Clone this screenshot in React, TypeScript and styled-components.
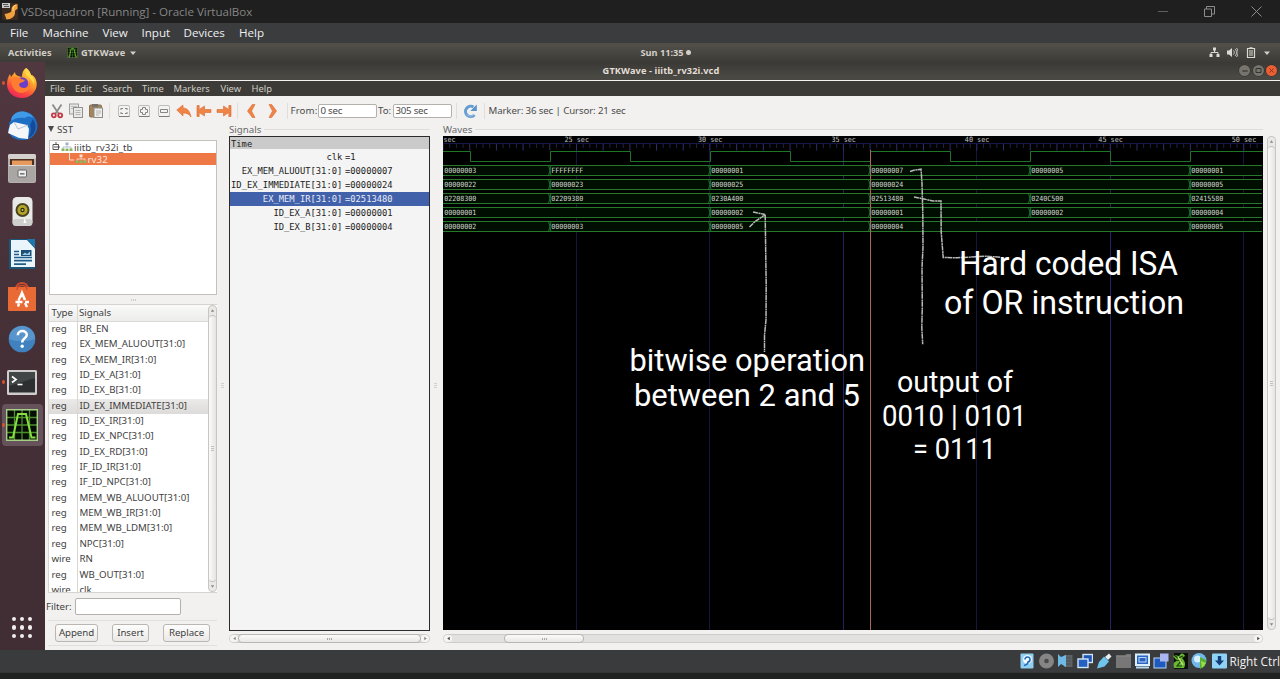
import React from "react";
import styled, { createGlobalStyle } from "styled-components";

const Global = createGlobalStyle`
  * { box-sizing: border-box; }
  body { margin: 0; background: #202020; overflow: hidden; }
`;

const ui = `"Noto Sans", "Open Sans", sans-serif`;
const host = `"Open Sans", "Noto Sans", sans-serif`;
const mono = `"DejaVu Sans Mono", "Liberation Mono", monospace`;

const Screen = styled.div`
  width: 1280px;
  height: 679px;
  display: flex;
  flex-direction: column;
  overflow: hidden;
  background: #202121;
  font-family: ${ui};
  font-size: 9.7px;
  color: #3f3f3f;
  white-space: pre;
`;

const HostTitle = styled.header`
  height: 23px;
  flex: none;
  display: flex;
  align-items: center;
  background: #1f1f1f;
  color: #858585;
  font: 11.6px ${host};
  padding: 0 18px 0 2px;
`;
const HostName = styled.span`
  margin-left: 3px;
  flex: 1;
  letter-spacing: -0.04px;
`;
const HostControls = styled.div`
  display: flex;
  gap: 36px;
  align-items: center;
`;

const HostMenu = styled.nav`
  height: 20px;
  flex: none;
  display: flex;
  align-items: center;
  padding: 0 0 1px 10px;
  background: #3a3c3e;
  color: #f0f0f0;
  font: 11.6px ${host};
`;
const MenuItem = styled.span<{ $w: number; $ls?: number }>`
  width: ${(p) => p.$w}px;
  flex: none;
  letter-spacing: ${(p) => p.$ls ?? 0}px;
`;

const GnomeBar = styled.div`
  height: 19px;
  flex: none;
  display: grid;
  grid-template-columns: 1fr auto 1fr;
  align-items: center;
  padding: 0 10px 0 8px;
  background: linear-gradient(#504e47 0%, #504e47 15%, #3d3b37 100%);
  color: #d3d0c9;
  font-weight: 700;
  font-size: 9.2px;
`;
const BarGroup = styled.div<{ $end?: boolean; $gap: number }>`
  display: flex;
  align-items: center;
  gap: ${(p) => p.$gap}px;
  justify-content: ${(p) => (p.$end ? "flex-end" : "flex-start")};
`;
const Clock = styled.div`
  display: flex;
  align-items: center;
  gap: 2px;
  margin-left: 53px;
`;
const ClockDot = styled.i`
  width: 5px;
  height: 5px;
  border-radius: 50%;
  background: #d3d0c9;
`;

const Desktop = styled.div`
  height: 588px;
  flex: none;
  display: flex;
`;
const Dock = styled.aside`
  width: 45px;
  flex: none;
  display: flex;
  flex-direction: column;
  background: linear-gradient(#513740, #432f35 55%, #412e34);
`;
const DockSlot = styled.div<{ $on?: boolean }>`
  position: relative;
  width: 41px;
  height: 41.75px;
  margin: 0 0 1px 1.5px;
  flex: none;
  display: flex;
  align-items: center;
  justify-content: center;
  border-radius: 4px;
  background: ${(p) => (p.$on ? "#66525a" : "transparent")};
`;
const RunDot = styled.i`
  position: absolute;
  left: 0;
  top: 19px;
  width: 3px;
  height: 4px;
  border-radius: 50%;
  background: #d8532c;
`;
const AppsGrid = styled.div`
  margin: auto 0 11px 12px;
  display: grid;
  grid-template-columns: repeat(3, 4px);
  gap: 4px;
  padding-bottom: 1px;
  i { width: 4.4px; height: 4.4px; border-radius: 50%; background: #f1eeee; }
`;

const Win = styled.main`
  flex: 1;
  display: flex;
  flex-direction: column;
  background: #f2f1f0;
  min-width: 0;
`;
const WinTitle = styled.div`
  height: 19px;
  flex: none;
  display: grid;
  grid-template-columns: 1fr auto 1fr;
  align-items: center;
  background: linear-gradient(#3b3935, #4a4843 80%);
  border-bottom: 1px solid #f4f3f1;
  color: #e2ded6;
  font-weight: 700;
  font-size: 9.2px;
  padding: 0 3px 1px 0;
`;
const WinName = styled.span`
  letter-spacing: 0.13px;
`;
const WinButtons = styled.div`
  display: flex;
  justify-content: flex-end;
  gap: 2.5px;
`;
const WinButton = styled.span<{ $c: string }>`
  width: 11px;
  height: 11px;
  border-radius: 50%;
  display: flex;
  align-items: center;
  justify-content: center;
  background: ${(p) => p.$c};
  box-shadow: 0 0 0 0.5px #2f2d29;
`;
const WinMenu = styled.nav`
  height: 15px;
  flex: none;
  display: flex;
  align-items: center;
  padding-left: 5px;
  background: #3c3b37;
  color: #d0ccc4;
  font-size: 9.4px;
`;

const Toolbar = styled.div`
  height: 30px;
  flex: none;
  display: flex;
  align-items: center;
  padding: 0 0 1px 2px;
  color: #4b4b4b;
`;
const Tool = styled.span<{ $w: number }>`
  width: ${(p) => p.$w}px;
  height: 16px;
  flex: none;
  display: flex;
  align-items: center;
  justify-content: center;
`;
const Sep = styled.span<{ $m: number }>`
  width: 1px;
  height: 16px;
  margin: 0 ${(p) => p.$m}px;
  background: #e0dedb;
  flex: none;
`;
const ToolLabel = styled.span<{ $w: number; $ls: number; $pad?: number }>`
  width: ${(p) => p.$w}px;
  padding-left: ${(p) => p.$pad ?? 0}px;
  letter-spacing: ${(p) => p.$ls}px;
  flex: none;
`;
const Field = styled.span<{ $w: number; $h: number }>`
  width: ${(p) => p.$w}px;
  height: ${(p) => p.$h}px;
  flex: none;
  display: flex;
  align-items: center;
  padding-left: 2px;
  background: #fff;
  border: 1px solid #b4b0ab;
  border-radius: 2px;
  letter-spacing: -0.25px;
`;

const Work = styled.div`
  flex: 1;
  min-height: 0;
  display: flex;
`;

const Left = styled.section`
  width: 172px;
  flex: none;
  display: flex;
  flex-direction: column;
`;
const SstHead = styled.div`
  height: 14px;
  display: flex;
  align-items: center;
  gap: 3px;
  padding: 0 0 8px 3px;
  flex: none;
`;
const Tree = styled.div`
  width: 168px;
  height: 155px;
  margin-left: 4px;
  flex: none;
  background: #fff;
  border: 1px solid #c4c1bd;
`;
const TreeRow = styled.div<{ $on?: boolean; $pad: number }>`
  height: 12px;
  display: flex;
  align-items: center;
  gap: 1px;
  padding-left: ${(p) => p.$pad}px;
  background: ${(p) => (p.$on ? "#ef7847" : "transparent")};
  color: ${(p) => (p.$on ? "#ffe9de" : "#3f3f3f")};
  letter-spacing: 0.08px;
`;
const HGrip = styled.div`
  height: 9px;
  flex: none;
  display: flex;
  align-items: center;
  justify-content: center;
  gap: 1px;
  padding-left: 4px;
  i { width: 1px; height: 2px; background: #cfccc8; }
`;
const ListWrap = styled.div`
  height: 289px;
  flex: none;
  margin-left: 3px;
  display: flex;
  border: 1px solid #d6d3d0;
  border-right: 0;
  background: #fff;
`;
const List = styled.div`
  width: 160px;
  overflow: hidden;
`;
const ListRow = styled.div<{ $on?: boolean; $head?: boolean }>`
  height: ${(p) => (p.$head ? 17 : 15.35)}px;
  display: grid;
  grid-template-columns: 28px 1fr;
  align-items: stretch;
  line-height: ${(p) => (p.$head ? 16 : 14.4)}px;
  background: ${(p) =>
    p.$head
      ? "linear-gradient(#fafafa, #ececeb)"
      : p.$on
      ? "linear-gradient(#ebeae8, #dddbd9)"
      : "#fff"};
  border-bottom: ${(p) => (p.$head ? "1px solid #dcdad8" : "0")};
  span { padding-left: 2.5px; letter-spacing: ${(p) => (p.$head ? -0.05 : -0.05)}px; }
  span + span { border-left: 1px solid #d9d7d5; padding-left: ${(p) => (p.$head ? 1 : 1.5)}px; }
`;
const VScroll = styled.div<{ $h: string }>`
  width: 9px;
  height: ${(p) => p.$h};
  flex: none;
  display: flex;
  flex-direction: column;
  border: 1px solid #c9c5c1;
  border-radius: 4px;
  background: #ebe9e7;
`;
const ScrollEnd = styled.span`
  width: 7px;
  height: 9px;
  flex: none;
  display: flex;
  align-items: center;
  justify-content: center;
`;
const VThumb = styled.span`
  flex: 1;
  display: flex;
  flex-direction: column;
  align-items: center;
  justify-content: center;
  gap: 1px;
  border: 1px solid #c2beba;
  border-width: 1px 0;
  border-radius: 4px;
  background: linear-gradient(90deg, #fbfbfa, #e6e4e2);
  i { width: 3px; height: 1px; background: #c4c1bd; }
`;
const FilterRow = styled.div`
  height: 27px;
  flex: none;
  display: flex;
  align-items: center;
  padding-left: 1px;
`;
const ButtonRow = styled.div`
  height: 26px;
  flex: none;
  margin: 0 0 0 3px;
  display: flex;
  align-items: center;
  padding-left: 7px;
  border-top: 1px solid #e2e0de;
  border-bottom: 1px solid #e2e0de;
`;
const Button = styled.button<{ $w: number; $gap: number }>`
  width: ${(p) => p.$w}px;
  height: 18px;
  margin: 0 ${(p) => p.$gap}px 0 0;
  padding: 0;
  flex: none;
  border: 1px solid #bab6b1;
  border-radius: 3px;
  background: linear-gradient(#fdfdfd, #ebe9e7);
  font: 9.7px/14px ${ui};
  letter-spacing: -0.05px;
  color: #3f3f3f;
`;

const VGrip = styled.div<{ $w: number; $dx: number }>`
  width: ${(p) => p.$w}px;
  flex: none;
  display: flex;
  flex-direction: column;
  align-items: center;
  padding: 257px ${(p) => p.$dx}px 0 0;
  gap: 1px;
  i { width: 3px; height: 1px; background: #d2cfcc; }
`;

const Frame = styled.section<{ $w: number }>`
  width: ${(p) => p.$w}px;
  flex: none;
  display: flex;
  flex-direction: column;
`;
const FrameLabel = styled.div`
  height: 14px;
  margin-top: -4px;
  flex: none;
  display: flex;
  align-items: center;
  gap: 3px;
  color: #6a6a6a;
  &::after { content: ""; flex: 1; height: 1px; background: #dfddda; }
`;
const SignalBox = styled.div`
  height: 495px;
  flex: none;
  border: 1px solid #2b2b2b;
  background: #f4f4f4;
  font: 8.8px/14px ${mono};
  color: #222;
`;
const TimeHead = styled.div`
  height: 12px;
  line-height: 14px;
  padding-left: 1px;
  background: #cacaca;
  margin-bottom: 1px;
`;
const SignalRow = styled.div<{ $on?: boolean }>`
  height: 14px;
  display: grid;
  grid-template-columns: 112.3px 1fr;
  column-gap: 2.7px;
  background: ${(p) => (p.$on ? "#4261ab" : "transparent")};
  color: ${(p) => (p.$on ? "#e6ebf7" : "#222")};
  span:first-child { text-align: right; }
`;
const HScroll = styled.div<{ $mt: number }>`
  height: 9px;
  flex: none;
  margin-top: ${(p) => p.$mt}px;
  display: flex;
  align-items: center;
  border: 1px solid #cfccc8;
  border-radius: 5px;
  background: #e3e1df;
`;
const HThumb = styled.span<{ $l: number; $w: number }>`
  margin-left: ${(p) => p.$l}px;
  width: ${(p) => p.$w}px;
  height: 9px;
  flex: none;
  display: flex;
  align-items: center;
  justify-content: center;
  gap: 1px;
  border: 1px solid #b9b5b0;
  border-radius: 4px;
  background: linear-gradient(#fbfbfa, #e9e7e5);
  i { width: 1px; height: 2px; background: #a9a6a2; }
`;
const HEnd = styled.span<{ $auto?: boolean }>`
  width: 8px;
  flex: none;
  height: 7px;
  border-radius: 4px;
  background: #f6f5f4;
  display: flex;
  align-items: center;
  justify-content: center;
  margin-left: ${(p) => (p.$auto ? "auto" : "0")};
`;
const WaveSvg = styled.svg`
  display: block;
  width: 820px;
  height: 494px;
  flex: none;
  background: #000;
`;
const RightRail = styled.div`
  flex: 1;
  padding: 10px 0 0 3px;
  margin-left: 1px;
`;

const StatusBar = styled.footer`
  height: 23px;
  flex: none;
  display: flex;
  align-items: center;
  justify-content: flex-end;
  background: #3a3b3c;
  color: #f2f2f2;
  font: 11.8px ${host};
  padding-bottom: 1px;
  border-bottom: 1px solid #343534;
`;
const StatusIcons = styled.div`
  display: flex;
  gap: 3.15px;
  margin-right: 3px;
`;
const StatusText = styled.span`
  width: 50.5px;
  letter-spacing: -0.02px;
`;

/* ---------- dock icons ---------- */
const Ico = ({ children, s = 32 }: { children: React.ReactNode; s?: number }) => (
  <svg width={s} height={s} viewBox="0 0 32 32">{children}</svg>
);

const Firefox = () => (
  <Ico>
    <defs>
      <linearGradient id="ff" x1="0.8" y1="0" x2="0.3" y2="1">
        <stop offset="0" stopColor="#ffe14a" />
        <stop offset="0.45" stopColor="#ff9a2b" />
        <stop offset="0.75" stopColor="#fb4a3f" />
        <stop offset="1" stopColor="#e8255f" />
      </linearGradient>
    </defs>
    <path d="M20 1c3 2 4 4 5 7 2 0 4 2 5 5 3 9-4 18-14 18C7 31 1 25 1 17c0-4 1-7 3-10l1 3 4-5c0 2 1 3 3 4l4 1c0-4 1-7 4-9z" fill="url(#ff)" />
    <circle cx="16" cy="16.500" r="6.200" fill="#6a3fc8" />
    <path d="M6 12c3-3 7-2 9 0l4 1c-1 2-3 2-5 3-2 2 0 5 4 5 4 0 6-4 5-8 3 5 1 12-7 13-7 0-12-7-10-14z" fill="#ff7d30" />
    <path d="M20 1c3 2 4 4 5 7 2 2 4 5 3 10-1-4-4-7-7-9-2-2-2-5-1-8z" fill="#ffd84a" />
  </Ico>
);
const Thunderbird = () => (
  <Ico>
    <path d="M10 3c8-4 19 0 21 10 2 9-5 18-15 17C8 30 3 26 2 19c1-1 2-3 1-5 0-2 1-3 3-4-1-3 1-5 4-7z" fill="#1d6fc6" />
    <path d="M10 3c6-3 14-1 18 5-4-2-7-2-9 0-6-1-10 0-14 3 0-4 2-6 5-8z" fill="#3f9ae8" />
    <path d="M27 9c5 7 3 17-7 20 5-4 6-9 4-14z" fill="#154a98" />
    <path d="M4 15l4-3 13 3 2 4-1 10-9-1L2 23z" fill="#f4f6fa" />
    <path d="M8 12l4 7 10-4" fill="none" stroke="#b8c4d4" strokeWidth="1" />
  </Ico>
);
const Files = () => (
  <Ico>
    <rect x="2" y="2" width="28" height="29" rx="2" fill="#b3b0ad" />
    <rect x="2" y="2" width="28" height="5" rx="2" fill="#d2cfcc" />
    <rect x="4" y="7" width="24" height="6" fill="#4f2f20" />
    <path d="M6 8.500h20v5H6z" fill="#e79a5e" />
    <rect x="3" y="13" width="26" height="17" fill="#a9a6a4" />
    <path d="M3 13.500h26" stroke="#dcdad8" />
    <rect x="12" y="18" width="8.500" height="7" rx="1" fill="#efefef" stroke="#666" strokeWidth="1" />
    <rect x="14" y="21" width="4.500" height="1.600" fill="#777" />
  </Ico>
);
const Rhythmbox = () => (
  <Ico>
    <rect x="6.500" y="2" width="20" height="29" rx="4.500" fill="#e9e9e7" />
    <rect x="6.500" y="24" width="20" height="7" rx="3.500" fill="#cfcfcd" />
    <circle cx="16.500" cy="15" r="7" fill="#4a4520" />
    <circle cx="16.500" cy="15" r="5" fill="#b5a52c" />
    <circle cx="16.500" cy="15" r="2.200" fill="#2c2a18" />
    <circle cx="16.500" cy="15" r="1" fill="#d8c94a" />
    <path d="M18.500 23l2 5h-3z" fill="#fff" />
  </Ico>
);
const Writer = () => (
  <Ico>
    <path d="M3 1h26v30H3z" fill="#1b5578" />
    <path d="M5 2h16l8 8.500V29H5z" fill="#e9f4fb" />
    <path d="M21 1h8v9.500z" fill="#1d76ad" />
    <g stroke="#1c5d8c" strokeWidth="1.700">
      <path d="M8 13.500h5M8 16.500h5M8 19.500h18M8 22.700h18M8 26.200h12" />
    </g>
    <rect x="15" y="12" width="10.500" height="6" fill="#1c4f78" />
    <path d="M16 17l3-2.500 2 1.500 3-2.500V17z" fill="#9cc7e4" />
  </Ico>
);
const Software = () => (
  <Ico>
    <path d="M10 8c0-8 12-8 12 0" fill="none" stroke="#d04c2a" strokeWidth="2" />
    <path d="M2 6h28v23a1 1 0 0 1-1 1H3a1 1 0 0 1-1-1z" fill="#ea6a35" />
    <path d="M11 9c0-6 10-6 10 0" fill="none" stroke="#d04c2a" strokeWidth="1.500" />
    <path d="M14.500 16l1.500-4 3 7" stroke="#fff" strokeWidth="2.600" fill="none" />
    <path d="M14.500 15l-2 4.500M9.500 21h7M19 21h4M12 25.500l1-3M19 22l2 4" stroke="#fff" strokeWidth="2.400" fill="none" />
  </Ico>
);
const HelpIco = () => (
  <Ico>
    <circle cx="16" cy="16" r="13.300" fill="#4082c0" />
    <path d="M3 16a13 13 0 0 1 26 0c-8 3-18 3-26 0z" fill="#5895cd" />
    <path d="M11.800 12.200c0-5.500 9-5.500 9-.4 0 3.600-4.600 3.500-4.600 7.700" fill="none" stroke="#fff" strokeWidth="2.500" />
    <circle cx="16.200" cy="23.300" r="1.700" fill="#fff" />
  </Ico>
);
const Terminal = () => (
  <Ico>
    <rect x="1" y="4" width="30" height="25" rx="1.500" fill="#cfcccc" />
    <rect x="3" y="6" width="26" height="20.500" fill="#2d2f30" />
    <path d="M3 6h26v6L3 20z" fill="#434647" />
    <path d="M6 10.500l4 3-4 3" fill="none" stroke="#fff" strokeWidth="1.700" />
    <path d="M11.500 18.500h5" stroke="#fff" strokeWidth="1.600" />
  </Ico>
);
const GtkWave = ({ s = 32 }: { s?: number }) => (
  <Ico s={s}>
    <rect x="0" y="0" width="32" height="32" fill="#060d04" />
    <path d="M8.500 1v30M16 1v30M23.500 1v30M1 8.500h30M1 16h30M1 23.500h30" fill="none" stroke="#4b8f2c" strokeWidth="1.300" />
    <path d="M.7.7h30.600v30.600H.7z" fill="none" stroke="#a5cf84" strokeWidth="1.400" />
    <path d="M3 28.500h4l5-23.500h8l5.500 23.500H29.500" fill="none" stroke="#86e040" strokeWidth="2" />
  </Ico>
);

/* ---------- toolbar icons ---------- */
const T = ({ children }: { children: React.ReactNode }) => (
  <svg width="16" height="16" viewBox="0 0 16 16">{children}</svg>
);
const orange = { fill: "#f08346", stroke: "#d96a30", strokeWidth: 0.6 };
const Cut = () => (
  <T>
    <path d="M3.500 1.500l6 9M12.500 1.500l-6 9" stroke="#8a8a8a" strokeWidth="1.800" fill="none" />
    <circle cx="4.800" cy="12.300" r="2" fill="none" stroke="#c23a45" strokeWidth="1.800" />
    <circle cx="11.200" cy="12.300" r="2" fill="none" stroke="#c23a45" strokeWidth="1.800" />
  </T>
);
const Copy = () => (
  <T>
    <rect x="1.500" y="1" width="9" height="10" fill="#e8e8e6" stroke="#9c9c98" />
    <path d="M3 3.500h6M3 5.500h4" stroke="#bbb" />
    <rect x="5.500" y="4.500" width="9" height="10" fill="#e9e9e7" stroke="#92928e" />
    <path d="M7.500 7.500h5M7.500 9.500h5M7.500 11.500h5" stroke="#b4b4b2" />
  </T>
);
const Paste = () => (
  <T>
    <rect x="1.500" y="2" width="12" height="12" rx="1" fill="#a5845a" stroke="#8b7658" />
    <rect x="4" y="1" width="6" height="3" fill="#77716a" />
    <rect x="6" y="5" width="8.500" height="9.500" fill="#eeeeec" stroke="#8d8d89" />
    <path d="M8 8h5M8 10h5M8 12h3" stroke="#b4b4b2" />
  </T>
);
const Zoom = ({ d }: { d: string }) => (
  <T>
    <rect x="2.500" y="2.500" width="11" height="11" rx="1.500" fill="#f3f3f1" stroke="#bcbcb8" />
    <path d="M3 13.500h10.500" stroke="#7b7b78" />
    <path d={d} stroke="#858581" strokeWidth="1" fill="none" />
  </T>
);
const Undo = () => (
  <T><path d="M.8 7L7 2v3c4 0 7 3 8 9-2-3-4-4-8-4v3z" {...orange} /></T>
);
const First = () => (
  <T><path d="M1 2.500h2.200v4L8.500 3v3.500H15v3H8.500V13L3.200 9.500v4H1z" {...orange} /></T>
);
const Last = () => (
  <T><path d="M15 2.500h-2.200v4L7.500 3v3.500H1v3h6.500V13l5.300-3.500v4H15z" {...orange} /></T>
);
const Prev = () => (
  <T><path d="M9.300 1.500L4.500 8l4.800 6.500h2.700L8.500 8 12 1.500z" {...orange} /></T>
);
const Next = () => (
  <T><path d="M6.700 1.500L11.500 8l-4.800 6.500H4L7.500 8 4 1.500z" {...orange} /></T>
);
const Reload = () => (
  <T>
    <path d="M12.500 12a5.200 5.200 0 1 1-1-8" fill="none" stroke="#659dd2" strokeWidth="3" />
    <path d="M14.800 1.500v6.500H8.300z" fill="#5a94cc" />
    <path d="M11.500 12a4.600 4.600 0 0 1-7-1" fill="none" stroke="#9dc4e6" strokeWidth="1" />
  </T>
);
const NodeIco = ({ c }: { c: string }) => (
  <svg width="12" height="10" viewBox="0 0 12 10">
    <rect x="4.500" y="0.500" width="3" height="2.500" fill={c} />
    <path d="M6 3v2M2 7V5h8v2" stroke={c} fill="none" strokeWidth="0.800" />
    <rect x="0.500" y="6.500" width="3" height="2.500" fill="#86b860" />
    <rect x="4.500" y="6.500" width="3" height="2.500" fill="#86b860" />
    <rect x="8.500" y="6.500" width="3" height="2.500" fill="#86b860" />
  </svg>
);
const Tri = ({ d, s = 5, c = "#8b8884" }: { d: string; s?: number; c?: string }) => (
  <svg width={s} height={s} viewBox="0 0 6 6"><path d={d} fill={c} /></svg>
);
const UP = "M3 1.500l2 3H1z";
const DOWN = "M3 4.500l2-3H1z";
const LEFT = "M1.500 3l3-2v4z";
const RIGHT = "M4.500 3l-3-2v4z";

/* ---------- waveform ---------- */
const X25 = 576.5;
const SEC = 26.69;
const labels = [25, 30, 35, 40, 45, 50];
const ticks = Array.from({ length: 123 }, (_, i) => ({ x: X25 + (i - 20) * (SEC / 4), major: i % 4 === 0 })).filter(
  (t) => t.x < 1262
);
const end = 1262;
const buses: [number, string][][] = [
  [[444, "00000003"], [550, "FFFFFFFF"], [710, "00000001"], [870, "00000007"], [1030, "00000005"], [1190, "00000001"]],
  [[444, "00000022"], [550, "00000023"], [710, "00000025"], [870, "00000024"], [1190, "00000005"]],
  [[444, "02208300"], [550, "02209380"], [710, "0230A400"], [870, "02513480"], [1030, "0240C500"], [1190, "02415580"]],
  [[444, "00000001"], [710, "00000002"], [870, "00000001"], [1030, "00000002"], [1190, "00000004"]],
  [[444, "00000002"], [550, "00000003"], [710, "00000005"], [870, "00000004"], [1190, "00000005"]],
];
const notes: [number, number, number, number, string][] = [
  [959, 274.5, 219, 32.5, "Hard coded ISA"],
  [944, 313.5, 240, 32.5, "of OR instruction"],
  [629.5, 370.5, 235.5, 30.5, "bitwise operation"],
  [634, 406, 226, 30.5, "between 2 and 5"],
  [897, 392, 116, 29, "output of"],
  [882, 425.5, 144.5, 29.5, "0010 | 0101"],
  [913, 458.5, 83, 29.5, "= 0111"],
];
const strokes = [
  "M753 212l12 2.500M749.500 227l5-5 11-7.500M765.200 215l.4 30 .6 40-.2 35-1.500 15v17",
  "M910 171.500l5-1.500 6-.8 1 14 .8 30 .2 34-1 20 .3 40-.5 20 .9 17",
  "M914 197l10 2 9 2 8 0 .2 31 2 25.500 14 .2 12-.5 16-1 15 1",
];

const Waves = () => (
  <WaveSvg viewBox="443 136 820 494">
    {labels.map((t, i) => (
      <path key={t} d={`M${Math.round(X25 + i * 5 * SEC - 0.5) + 0.5} 144V630`} stroke={t === 35 || t === 45 ? "#22225e" : "#151540"} />
    ))}
    <path d="M443 143.500H1263" stroke="#17174a" />
    {ticks.map((t, i) => (
      <path key={i} d={`M${t.x} 144V${t.major ? 150.5 : 148}`} stroke={t.major ? "#2f2f6a" : "#20204e"} />
    ))}
    <g fill="#c4c4c4" fontFamily={mono} fontSize="7.300">
      <text x="443.500" y="142" textLength="12" lengthAdjust="spacingAndGlyphs">sec</text>
      {labels.map((t, i) => (
        <text key={t} x={X25 + i * 5 * SEC - 12} y="142" textLength="24.500" lengthAdjust="spacingAndGlyphs">{`${t} sec`}</text>
      ))}
    </g>
    <path
      d="M443 151.500H470.500V161.500H550.500V151.500H630.500V161.500H710.500V151.500H790.500V161.500H870.500V151.500H950.500V161.500H1030.500V151.500H1110.500V161.500H1190.500V151.500H1263"
      fill="none"
      stroke="#1f7426"
    />
    {buses.map((segs, r) => {
      const y = 165.5 + r * 14;
      return (
        <g key={r}>
          <rect x="443" y={y} width={end - 443} height="10" fill="#000d01" />
          <path d={`M443 ${y}H${end}M443 ${y + 10}H${end}`} stroke="#28782c" />
          {segs.map(([x, v], i) => (
            <g key={i}>
              {i > 0 && <path d={`M${x - 1.5} ${y}l1.500 5-1.500 5M${x + 1} ${y}l-1 5 1 5`} fill="none" stroke="#26802d" strokeWidth="0.900" />}
              <text x={i ? x + 1.3 : x + 0.3} y={y + 7.7} fill="#d3d9d3" fontFamily={mono} fontSize="7.200" textLength="32" lengthAdjust="spacingAndGlyphs">{v}</text>
            </g>
          ))}
        </g>
      );
    })}
    <path d="M870.500 150V630" stroke="#a9695a" />
    {strokes.map((d) => (
      <path key={d} d={d} fill="none" stroke="#b9b9b9" strokeWidth="1.500" strokeDasharray="5 0.600 2 0.400" />
    ))}
    <g fill="#fff" fontFamily="Roboto, sans-serif">
      {notes.map(([x, y, w, s, t]) => (
        <text key={t} x={x} y={y} fontSize={s} textLength={w} lengthAdjust="spacingAndGlyphs">{t}</text>
      ))}
    </g>
  </WaveSvg>
);

/* ---------- status bar icons ---------- */
const S = ({ children }: { children: React.ReactNode }) => (
  <svg width="16" height="16" viewBox="0 0 16 16">{children}</svg>
);
const StatusSet = () => (
  <StatusIcons>
    <S><rect x="1.500" y="0.500" width="13" height="15" rx="1" fill="#8fd0f2" /><circle cx="8.500" cy="6.500" r="4.500" fill="#f4fbff" /><path d="M6 6.500a2.500 2.500 0 1 1 3 2.500c0 2-2 3-4 3.500" fill="none" stroke="#1f6cb8" strokeWidth="1.600" /></S>
    <S><circle cx="8.500" cy="8" r="7.500" fill="#858585" /><circle cx="8.500" cy="8" r="2.300" fill="#4a4a4a" /></S>
    <S><rect x="7" y="2" width="8.500" height="12" fill="#5d6266" /><path d="M9 5h5M9 8h5M9 11h5" stroke="#4a4e52" /><path d="M1 1l3 3 5-2v12l-5-3-3 3z" fill="#6fb9e6" /></S>
    <S><rect x="6" y="1.500" width="9.500" height="8" fill="#1f55b4" stroke="#cfe6fa" strokeWidth="1.400" /><rect x="1" y="6" width="10" height="8.500" fill="#2460c0" stroke="#cfe6fa" strokeWidth="1.400" /></S>
    <S><path d="M9 4l4-3.500 2.500 3L12 7z" fill="#e8eef4" /><path d="M8 3.500l5 5-4.500 5L1 15.500l2-6.500z" fill="#6fc4ee" /></S>
    <S><path d="M1 2.500h9l1.500-1.500H16V15H1z" fill="#777" /><path d="M1 3h15" stroke="#8b8b8b" /></S>
    <S><rect x="1" y="0.500" width="15" height="12.500" fill="#d9eefc" /><rect x="3" y="2.500" width="11" height="8.500" fill="#2a62c0" /><rect x="5" y="4.500" width="7" height="4.500" fill="#2a62c0" stroke="#bcd9f5" /><path d="M2 14.500h13" stroke="#b5d7f2" strokeWidth="2" /></S>
    <S><rect x="1" y="5" width="12" height="10" fill="#1f5ac0" stroke="#b9d8f5" /><rect x="7" y="0.500" width="8.500" height="8" fill="#a9b6ef" /></S>
    <S><rect x="2" y="0" width="14" height="16" fill="#0a0f08" /><path d="M1 3c3-3 5 2 7-1 2-3 4-1 5 1l-3 2c3 3 4 6 2 10H2c-1-5 0-6 3-7z" fill="#69b834" /><path d="M2 2l4 3 5-2M4 7l5 1-4 5h5" stroke="#1a3a0c" strokeWidth="1.100" fill="none" /><path d="M6 4l5 8" stroke="#cbea7c" strokeWidth="1.200" /></S>
    <S><circle cx="8" cy="7.500" r="7.500" fill="#6fb8e8" /><circle cx="6.500" cy="6" r="3.500" fill="#d8effc" /><path d="M9 4l6 3-1 6-5 3z" fill="#58b030" /><path d="M10 8l5 2-4 5z" fill="#9fdc4a" /></S>
    <S><rect x="1" y="0.500" width="15" height="15" rx="1" fill="#8fd4f7" /><path d="M6.800 3h3.400v4.500H13L8.500 12.500 4 7.500h2.800z" fill="#123f78" /></S>
  </StatusIcons>
);

const signals: [string, string][] = [
  ["reg", "BR_EN"], ["reg", "EX_MEM_ALUOUT[31:0]"], ["reg", "EX_MEM_IR[31:0]"], ["reg", "ID_EX_A[31:0]"],
  ["reg", "ID_EX_B[31:0]"], ["reg", "ID_EX_IMMEDIATE[31:0]"], ["reg", "ID_EX_IR[31:0]"], ["reg", "ID_EX_NPC[31:0]"],
  ["reg", "ID_EX_RD[31:0]"], ["reg", "IF_ID_IR[31:0]"], ["reg", "IF_ID_NPC[31:0]"], ["reg", "MEM_WB_ALUOUT[31:0]"],
  ["reg", "MEM_WB_IR[31:0]"], ["reg", "MEM_WB_LDM[31:0]"], ["reg", "NPC[31:0]"], ["wire", "RN"],
  ["reg", "WB_OUT[31:0]"], ["wire", "clk"],
];
const traced: [string, string][] = [
  ["clk", "=1"], ["EX_MEM_ALUOUT[31:0]", "=00000007"], ["ID_EX_IMMEDIATE[31:0]", "=00000024"],
  ["EX_MEM_IR[31:0]", "=02513480"], ["ID_EX_A[31:0]", "=00000001"], ["ID_EX_B[31:0]", "=00000004"],
];
const dock: [React.FC, boolean][] = [
  [Firefox, true], [Thunderbird, false], [Files, false], [Rhythmbox, false], [Writer, false],
  [Software, false], [HelpIco, false], [Terminal, true], [GtkWave as React.FC, true],
];
const hostMenu: [string, number][] = [["File", 32.5], ["Machine", 60], ["View", 39], ["Input", 42], ["Devices", 55.5], ["Help", 40]];
const winMenu: [string, number][] = [["File", 25], ["Edit", 27.5], ["Search", 39.5], ["Time", 31.5], ["Markers", 47], ["View", 31], ["Help", 40]];

export default function App() {
  return (
    <Screen>
      <Global />
      <HostTitle>
        <svg width="16" height="17" viewBox="0 0 16 17">
          <rect width="16" height="17" rx="1" fill="#3a2a22" />
          <path d="M15.500 1c-5 1-6 3-6 6s-3 3-7 4l2 5.500c5 0 8.500-3 8.500-6.500s1-3 2.500-4z" fill="#f0a03c" />
          <path d="M14 2c-3 1-3 3-3 6" stroke="#ffe08a" fill="none" />
          <rect x="0" y="0" width="8" height="5" fill="#c8c8c8" />
          <path d="M1 1.500h5M2 3.500h5" stroke="#555" />
        </svg>
        <HostName>VSDsquadron [Running] - Oracle VirtualBox</HostName>
        <HostControls>
          <svg width="11" height="11" viewBox="0 0 11 11"><path d="M1 5.500h10" stroke="#5e5e5e" /></svg>
          <svg width="11" height="11" viewBox="0 0 11 11"><path d="M.5 3h7v7.500h-7zM2.500 3V.5h8V8H8" stroke="#8c8c8c" fill="none" /></svg>
          <svg width="11" height="11" viewBox="0 0 11 11"><path d="M.5.5l10 10M10.500.5l-10 10" stroke="#8c8c8c" /></svg>
        </HostControls>
      </HostTitle>
      <HostMenu>
        {hostMenu.map(([t, w]) => <MenuItem key={t} $w={w}>{t}</MenuItem>)}
      </HostMenu>
      <GnomeBar>
        <BarGroup $gap={3}>
          <MenuItem $w={56} $ls={0.1}>Activities</MenuItem>
          <GtkWave s={11} />
          <MenuItem $w={46} $ls={0.2}>GTKWave</MenuItem>
          <Tri d="M0 1.500h6L3 5z" s={6} c="#d3d0c9" />
        </BarGroup>
        <Clock>Sun 11:35<ClockDot /></Clock>
        <BarGroup $gap={7} $end>
          <svg width="11" height="11" viewBox="0 0 11 11"><path d="M4 .5h3v3H4zM.5 7h3v3h-3zM7.500 7h3v3h-3z" fill="#dcd9d2" /><path d="M5.500 3v2.500M2 7V5.500h7V7" stroke="#dcd9d2" fill="none" /></svg>
          <svg width="11" height="11" viewBox="0 0 11 11"><path d="M0 3.500h2L5 1v9L2 7.500H0z" fill="#dcd9d2" /><path d="M6.500 3.500c1 1 1 3 0 4M8 2c2 2 2 5 0 7M9.500 1c2 3 2 6 0 9" stroke="#dcd9d2" strokeWidth="0.900" fill="none" /></svg>
          <svg width="12" height="11" viewBox="0 0 12 11"><path d="M2.500 1.500h7v9h-7zM4.500 0.800h3M4 4h4M4 6h4M4 8h4" stroke="#dcd9d2" strokeWidth="1.200" fill="none" /></svg>
          <Tri d="M0 1.500h6L3 5z" s={6} c="#d3d0c9" />
        </BarGroup>
      </GnomeBar>
      <Desktop>
        <Dock>
          {dock.map(([I, run], i) => (
            <DockSlot key={i} $on={i === 8}>
              {run && <RunDot />}
              <I />
            </DockSlot>
          ))}
          <AppsGrid>{Array.from({ length: 9 }, (_, i) => <i key={i} />)}</AppsGrid>
        </Dock>
        <Win>
          <WinTitle>
            <span />
            <WinName>GTKWave - iiitb_rv32i.vcd</WinName>
            <WinButtons>
              <WinButton $c="#77746d"><Tri d="M1 2.500h4v1H1z" s={8} c="#3b3935" /></WinButton>
              <WinButton $c="#77746d"><svg width="7" height="7" viewBox="0 0 7 7"><path d="M1 1.500h5v4H1z" fill="none" stroke="#35332f" /></svg></WinButton>
              <WinButton $c="#ec5f35"><svg width="7" height="7" viewBox="0 0 7 7"><path d="M1.500 1.500l4 4M5.500 1.500l-4 4" stroke="#8a3418" /></svg></WinButton>
            </WinButtons>
          </WinTitle>
          <WinMenu>
            {winMenu.map(([t, w]) => <MenuItem key={t} $w={w}>{t}</MenuItem>)}
          </WinMenu>
          <Toolbar>
            <Tool $w={19}><Cut /></Tool>
            <Tool $w={20}><Copy /></Tool>
            <Tool $w={20}><Paste /></Tool>
            <Sep $m={3.25} />
            <Tool $w={20}><Zoom d="M5 5.500h2M5 5v2M11 5v2M9 5.500h2M5 9v2M5 10.500h2M11 9v2M9 10.500h2" /></Tool>
            <Tool $w={20}><Zoom d="M6.500 4.500h3v2h2v3h-2v2h-3v-2h-2v-3h2z" /></Tool>
            <Tool $w={20}><Zoom d="M4.500 6.500h7v3h-7z" /></Tool>
            <Tool $w={20}><Undo /></Tool>
            <Tool $w={20.5}><First /></Tool>
            <Tool $w={20.5}><Last /></Tool>
            <Sep $m={2.5} />
            <Tool $w={20}><Prev /></Tool>
            <Tool $w={24}><Next /></Tool>
            <Sep $m={2.5} />
            <ToolLabel $w={27} $ls={0.1}>From:</ToolLabel>
            <Field $w={59} $h={14}>0 sec</Field>
            <ToolLabel $w={16} $ls={0} $pad={1.5}>To:</ToolLabel>
            <Field $w={59} $h={14}>305 sec</Field>
            <Sep $m={4} />
            <Tool $w={19}><Reload /></Tool>
            <Sep $m={4} />
            <ToolLabel $w={150} $ls={-0.12}>Marker: 36 sec | Cursor: 21 sec</ToolLabel>
          </Toolbar>
          <Work>
            <Left>
              <SstHead><Tri d="M0 0h6L3 6z" s={6} c="#4a4a4a" />SST</SstHead>
              <Tree>
                <TreeRow $pad={2}>
                  <svg width="8" height="10" viewBox="0 0 8 10"><path d="M1 2.500h5.500v5H1zM2 5h6M4 0v2.500" fill="none" stroke="#444" strokeWidth="0.900" /></svg>
                  <NodeIco c="#9fb0c8" />
                  iiitb_rv32i_tb
                </TreeRow>
                <TreeRow $pad={17.5} $on>
                  <svg width="6" height="12" viewBox="0 0 6 12"><path d="M1.500 0v7H6" fill="none" stroke="#fde0d2" /></svg>
                  <NodeIco c="#fbe1d4" />
                  rv32
                </TreeRow>
              </Tree>
              <HGrip><i /><i /><i /></HGrip>
              <ListWrap>
                <List>
                  <ListRow $head><span>Type</span><span>Signals</span></ListRow>
                  {signals.map(([k, n], i) => (
                    <ListRow key={n} $on={i === 5}><span>{k}</span><span>{n}</span></ListRow>
                  ))}
                </List>
                <VScroll $h="287px">
                  <ScrollEnd><Tri d={UP} /></ScrollEnd>
                  <VThumb><i /><i /><i /></VThumb>
                  <ScrollEnd><Tri d={DOWN} /></ScrollEnd>
                </VScroll>
              </ListWrap>
              <FilterRow>
                <ToolLabel $w={29} $ls={0}>Filter:</ToolLabel>
                <Field $w={106} $h={17} />
              </FilterRow>
              <ButtonRow>
                <Button $w={43} $gap={14}>Append</Button>
                <Button $w={37} $gap={14}>Insert</Button>
                <Button $w={47} $gap={0}>Replace</Button>
              </ButtonRow>
            </Left>
            <VGrip $w={12} $dx={2}><i /><i /><i /></VGrip>
            <Frame $w={201}>
              <FrameLabel>Signals</FrameLabel>
              <SignalBox>
                <TimeHead>Time</TimeHead>
                {traced.map(([n, v], i) => (
                  <SignalRow key={n} $on={i === 3}><span>{n}</span><span>{v}</span></SignalRow>
                ))}
              </SignalBox>
              <HScroll $mt={3}>
                <HEnd><Tri d={LEFT} /></HEnd>
                <HThumb $l={0} $w={183}><i /><i /><i /></HThumb>
                <HEnd $auto><Tri d={RIGHT} /></HEnd>
              </HScroll>
            </Frame>
            <VGrip $w={13} $dx={2}><i /><i /><i /></VGrip>
            <Frame $w={820}>
              <FrameLabel>Waves</FrameLabel>
              <Waves />
              <HScroll $mt={4}>
                <HEnd><Tri d={LEFT} c="#444" /></HEnd>
                <HThumb $l={52} $w={80}><i /><i /><i /></HThumb>
                <HEnd $auto><Tri d={RIGHT} c="#444" /></HEnd>
              </HScroll>
            </Frame>
            <RightRail>
              <VScroll $h="494px">
                <ScrollEnd><Tri d={UP} /></ScrollEnd>
                <VThumb><i /><i /><i /></VThumb>
                <ScrollEnd><Tri d={DOWN} /></ScrollEnd>
              </VScroll>
            </RightRail>
          </Work>
        </Win>
      </Desktop>
      <StatusBar>
        <StatusSet />
        <StatusText>Right Ctrl</StatusText>
      </StatusBar>
    </Screen>
  );
}
